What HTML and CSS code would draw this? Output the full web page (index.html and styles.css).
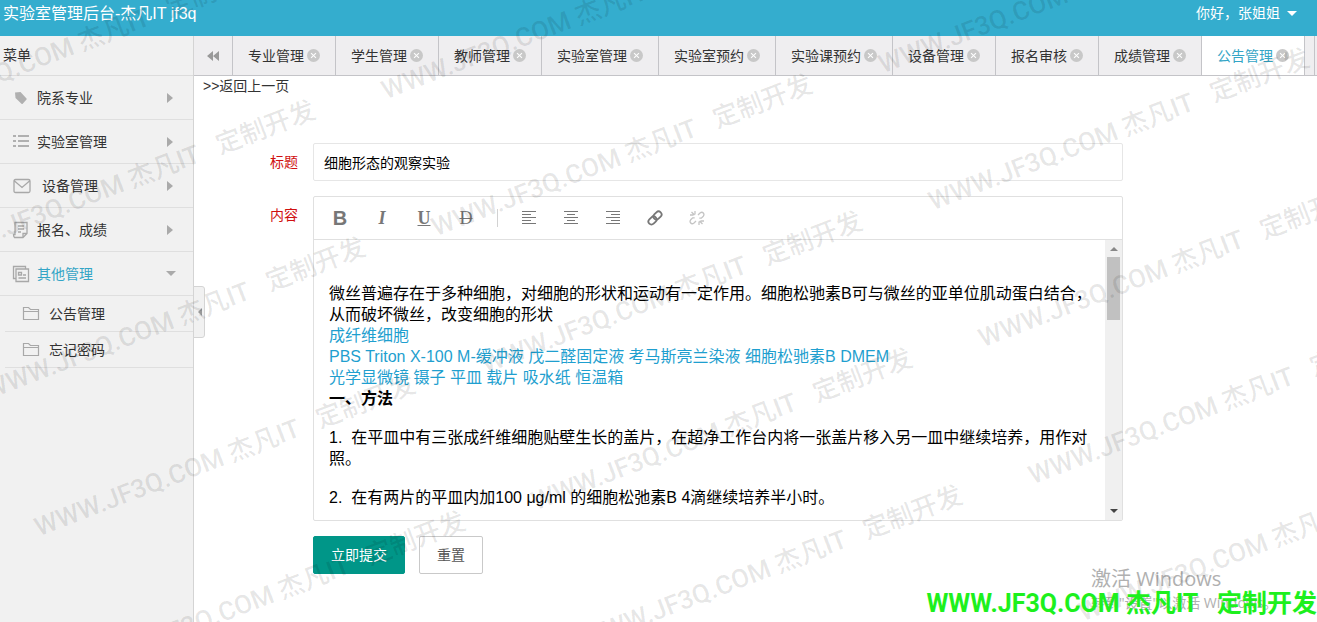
FILE: index.html
```html
<!DOCTYPE html>
<html lang="zh-CN">
<head>
    <meta charset="utf-8">
    <title>实验室管理后台</title>
    <link rel="stylesheet" href="styles.css">
</head>
<body>
    <header class="header">
        <span class="logo">实验室管理后台-杰凡IT jf3q</span>
        <a class="user" href="#">你好，张姐姐 <i class="caret"></i></a>
    </header>

    <div class="main">
        <nav class="side">
            <div class="side-title">菜单</div>
            <a class="item" href="#">
                <svg class="icon" width="18" height="18" viewBox="0 0 18 18"><path fill="#b0b0b0" d="M3 3.500L8.500 3 14.500 9.500Q15 10 14.500 10.500L10.500 15Q10 15.300 9.500 14.800L3.500 9Z"/></svg>
                院系专业<i class="arrow"></i>
            </a>
            <a class="item" href="#">
                <svg class="icon" width="18" height="18" viewBox="0 0 18 18"><path stroke="#b0b0b0" stroke-width="2" d="M1 3h3M6 3h11M1 8h3M6 8h11M1 13h3M6 13h11"/></svg>
                实验室管理<i class="arrow"></i>
            </a>
            <a class="item" href="#">
                <svg class="icon icon-mail" width="20" height="18" viewBox="0 0 20 18"><path fill="none" stroke="#a8a8a8" stroke-width="1.300" d="M3.500 2.500h13q1.500 0 1.500 1.500v10q0 1.500-1.500 1.500h-13q-1.500 0-1.500-1.500v-10q0-1.500 1.500-1.500zM2.500 4l7.500 6.500 7.500-6.500"/></svg>
                设备管理<i class="arrow"></i>
            </a>
            <a class="item" href="#">
                <svg class="icon" width="18" height="18" viewBox="0 0 18 18"><path fill="none" stroke="#a8a8a8" stroke-width="1.300" d="M3 1.500h12v11l-4 4h-8.500q-1-1-1-3h1.500zM15 12.500h-4v4M6 5h6M6 8h6M6 11h3"/></svg>
                报名、成绩<i class="arrow"></i>
            </a>
            <a class="item open" href="#">
                <svg class="icon" width="18" height="18" viewBox="0 0 18 18"><path fill="none" stroke="#a8a8a8" stroke-width="1.300" d="M4 4h12.500v12.500h-12.500zM4 13.500h-2.500v-12h12v2.500M6.500 7.500h3v2.500h-3zM11 10h3M6.500 13h7.500"/></svg>
                其他管理<i class="arrow"></i>
            </a>
            <a class="sub" href="#">
                <svg class="icon" width="18" height="16" viewBox="0 0 18 16"><path fill="none" stroke="#a8a8a8" stroke-width="1.200" d="M1.500 13.500v-12h5l2 2h8v10zM1.500 5.500h15"/></svg>
                公告管理
            </a>
            <a class="sub" href="#">
                <svg class="icon" width="18" height="16" viewBox="0 0 18 16"><path fill="none" stroke="#a8a8a8" stroke-width="1.200" d="M1.500 13.500v-12h5l2 2h8v10zM1.500 5.500h15"/></svg>
                忘记密码
            </a>
            <button class="fold" type="button" aria-label="收起菜单"></button>
        </nav>

        <div class="content">
            <div class="tabs">
                <button class="tab-prev" type="button" aria-label="向左">
                    <svg width="12" height="12" viewBox="0 0 12 12"><path fill="#999" d="M6 1v10L0 6zM12 1v10L6 6z"/></svg>
                </button>
                <button class="tab" type="button">专业管理<i class="close"></i></button>
                <button class="tab" type="button">学生管理<i class="close"></i></button>
                <button class="tab" type="button">教师管理<i class="close"></i></button>
                <button class="tab" type="button">实验室管理<i class="close"></i></button>
                <button class="tab" type="button">实验室预约<i class="close"></i></button>
                <button class="tab" type="button">实验课预约<i class="close"></i></button>
                <button class="tab" type="button">设备管理<i class="close"></i></button>
                <button class="tab" type="button">报名审核<i class="close"></i></button>
                <button class="tab" type="button">成绩管理<i class="close"></i></button>
                <button class="tab active" type="button">公告管理<i class="close"></i></button>
                <span class="tab-end"></span>
            </div>
            <a class="back" href="#">&gt;&gt;返回上一页</a>

            <form class="form" action="#">
                <div class="row">
                    <label for="title">标题</label>
                    <input class="text" id="title" name="title" value="细胞形态的观察实验">
                </div>
                <div class="row">
                    <label id="contentLabel">内容</label>
                    <div class="editor">
                        <div class="tools">
                            <button class="tool bold" type="button">B</button>
                            <button class="tool italic" type="button">I</button>
                            <button class="tool under" type="button">U</button>
                            <button class="tool strike" type="button">D</button>
                            <span class="split"></span>
                            <button class="tool" type="button" aria-label="左对齐"><svg width="16" height="16" viewBox="0 0 16 16"><path stroke="#777" d="M1 1.500h14M1 4.500h9M1 7.500h14M1 10.500h9M1 13.500h14"/></svg></button>
                            <button class="tool" type="button" aria-label="居中"><svg width="16" height="16" viewBox="0 0 16 16"><path stroke="#777" d="M1 1.500h14M4 4.500h8M1 7.500h14M4 10.500h8M1 13.500h14"/></svg></button>
                            <button class="tool" type="button" aria-label="右对齐"><svg width="16" height="16" viewBox="0 0 16 16"><path stroke="#777" d="M1 1.500h14M6 4.500h9M1 7.500h14M6 10.500h9M1 13.500h14"/></svg></button>
                            <button class="tool" type="button" aria-label="插入链接"><svg width="16" height="16" viewBox="0 0 16 16"><g fill="none" stroke="#777" stroke-width="1.800" transform="rotate(-45 8 8)"><rect x="0" y="5" width="9" height="6" rx="3"/><rect x="7" y="5" width="9" height="6" rx="3"/></g></svg></button>
                            <button class="tool" type="button" aria-label="清除链接"><svg width="16" height="16" viewBox="0 0 16 16"><path fill="none" stroke="#c4c4c4" stroke-width="1.300" d="M9 5l2-2q2-1.500 3.300 0t0 3.200l-2 2h-2M7 11l-2 2q-2 1.500-3.300 0t0-3.200l2-2h2M6 1v3.500M1 5h3.500M2.500 2l3 3M10 11.500v3.500M11.500 11h3.500M10.500 11l3 3"/></svg></button>
                        </div>
                        <div class="edit-wrap">
                            <div class="edit-body" contenteditable="true" role="textbox" aria-labelledby="contentLabel" spellcheck="false">
                                <p>微丝普遍存在于多种细胞，对细胞的形状和运动有一定作用。细胞松驰素B可与微丝的亚单位肌动蛋白结合，从而破坏微丝，改变细胞的形状<br>
                                <span class="blue">成纤维细胞<br>
                                PBS Triton X-100 M-缓冲液 戊二醛固定液 考马斯亮兰染液 细胞松驰素B DMEM<br>
                                光学显微镜 镊子 平皿 载片 吸水纸 恒温箱</span><br>
                                <b>一、方法</b></p>
                                <p>1.&nbsp; 在平皿中有三张成纤维细胞贴壁生长的盖片，在超净工作台内将一张盖片移入另一皿中继续培养，用作对照。</p>
                                <p>2.&nbsp; 在有两片的平皿内加100 μg/ml 的细胞松弛素B 4滴继续培养半小时。</p>
                            </div>
                            <div class="scroll">
                                <i class="scroll-up"></i>
                                <i class="thumb"></i>
                                <i class="scroll-down"></i>
                            </div>
                        </div>
                    </div>
                </div>
                <div class="buttons">
                    <button class="btn submit" type="submit">立即提交</button>
                    <button class="btn" type="reset">重置</button>
                </div>
            </form>
        </div>
    </div>

    <div class="activate">
        <div class="activate-title">激活 Windows</div>
        <div>转到"设置"以激活 Windows。</div>
    </div>
    <div class="marks"></div>
    <div class="brand">WWW.JF3Q.COM 杰凡IT&nbsp;&nbsp; 定制开发</div>

    <script src="script.js"></script>
</body>
</html>
```
FILE: styles.css
```css
* {
    box-sizing: border-box;
}

body {
    margin: 0;
    min-height: 100vh;
    display: flex;
    flex-direction: column;
    position: relative;
    overflow: hidden;
    font: 14px/20px "Liberation Sans", "Noto Sans CJK SC", sans-serif;
    color: #333;
    background: #fff;
}

a {
    color: inherit;
    text-decoration: none;
}

button, input {
    font: inherit;
    color: inherit;
    margin: 0;
}

.header {
    display: flex;
    justify-content: space-between;
    height: 36px;
    padding: 4px 20px 0 3px;
    background: #34adce;
    color: #fff;
}

.logo {
    font-size: 16px;
}

.user {
    display: flex;
    align-items: center;
    height: 18px;
    gap: 7px;
}

.caret {
    border: 5px solid transparent;
    border-top-color: #fff;
    border-bottom: 0;
}

.main {
    flex: 1;
    display: flex;
}

/* menu */
.side {
    position: relative;
    flex: 0 0 194px;
    background: #f1f1f1;
    border-right: 1px solid #d4d4d4;
}

.side-title {
    height: 40px;
    padding: 9px 3px;
    border-bottom: 1px solid #dcdcdc;
}

.item, .sub {
    display: flex;
    align-items: center;
    border-bottom: 1px solid #dfdfdf;
}

.item {
    height: 44px;
    padding: 0 17px 0 12px;
}

.sub {
    height: 36px;
    margin-left: 5px;
    padding-left: 17px;
}

.icon {
    margin-right: 7px;
}

.icon-mail {
    margin-right: 10px;
}

.sub .icon {
    margin-right: 9px;
}

.arrow {
    margin: 0 3px 0 auto;
    border: 5px solid transparent;
    border-left: 6px solid #aaa;
    border-right: 0;
}

.open {
    color: #34a5c6;
}

.open .arrow {
    margin-right: 0;
    border: 5px solid transparent;
    border-top-color: #aaa;
    border-bottom: 0;
}

.fold {
    position: absolute;
    left: 193px;
    top: 250px;
    width: 12px;
    height: 52px;
    padding: 0 4px;
    background: #f1f1f1;
    border: 1px solid #d4d4d4;
    border-radius: 0 3px 3px 0;
}

.fold::before {
    content: "";
    display: block;
    border: 4px solid transparent;
    border-right-color: #999;
    border-left: 0;
}

/* tabs */
.content {
    flex: 1;
    min-width: 0;
}

.tabs {
    display: flex;
    height: 40px;
    overflow: hidden;
    background: #efeef0;
    border-bottom: 1px solid #c4c4c8;
}

.tab, .tab-prev {
    display: flex;
    flex: none;
    align-items: center;
    border: 0;
    border-right: 1px solid #c4c4c8;
    background: none;
}

.tab-prev {
    width: 39px;
    justify-content: center;
}

.tab {
    gap: 3px;
    padding: 0 15px;
}

.active {
    background: #fff;
    color: #34a5c6;
}

.tab-end {
    width: 10px;
    border-right: 1px solid #c4c4c8;
}

.close {
    position: relative;
    width: 13px;
    height: 13px;
    border-radius: 50%;
    background: #c8c8c8;
}

.close::before, .close::after {
    content: "";
    position: absolute;
    left: 3px;
    top: 6px;
    width: 7px;
    height: 1px;
    background: #fff;
    transform: rotate(45deg);
}

.close::after {
    transform: rotate(-45deg);
}

.back {
    display: block;
    padding: 0 9px;
}

/* form */
.form {
    margin: 47px 194px 0 9px;
}

.row {
    display: flex;
    margin-bottom: 15px;
}

.row label {
    flex: 0 0 110px;
    padding: 9px 15px;
    text-align: right;
    color: #d01010;
}

.text {
    flex: 1;
    height: 38px;
    padding: 0 10px;
    border: 1px solid #e6e6e6;
    border-radius: 2px;
    color: #000;
}

.editor {
    flex: 1;
    min-width: 0;
    border: 1px solid #e0e0e0;
    border-radius: 2px;
}

.tools {
    display: flex;
    height: 43px;
    padding-left: 5px;
    border-bottom: 1px solid #e0e0e0;
}

.tool {
    display: flex;
    align-items: center;
    justify-content: center;
    width: 42px;
    padding: 0;
    border: 0;
    background: none;
    font-size: 18px;
    color: #777;
}

.bold {
    font-size: 20px;
    font-weight: bold;
}

.italic, .under, .strike {
    font-family: "Liberation Serif", serif;
}

.italic {
    font-style: italic;
    font-weight: bold;
}

.under {
    text-decoration: underline;
    font-weight: bold;
}

.strike {
    text-decoration: line-through;
}

.split {
    width: 1px;
    height: 18px;
    margin: 12px 10px 0;
    background: #d2d2d2;
}

.edit-wrap {
    display: flex;
    height: 280px;
}

.edit-body {
    flex: 1;
    min-width: 0;
    padding: 43px 12px 0 15px;
    overflow: hidden;
    font-size: 16px;
    line-height: 21px;
    color: #000;
}

.edit-body p {
    margin: 0 0 18px;
}

.blue {
    color: #1f9fcf;
}

.scroll {
    display: flex;
    flex-direction: column;
    align-items: center;
    width: 17px;
    padding: 7px 0;
    background: #f0f0f0;
}

.scroll-up, .scroll-down {
    border: 4px solid transparent;
}

.scroll-up {
    border-top: 0;
    border-bottom-color: #888;
}

.scroll-down {
    margin-top: auto;
    border-bottom: 0;
    border-top-color: #444;
}

.thumb {
    width: 13px;
    height: 63px;
    margin-top: 6px;
    background: #c1c1c1;
}

.buttons {
    display: flex;
    gap: 14px;
    padding-left: 110px;
}

.btn {
    height: 38px;
    padding: 0 17px;
    border: 1px solid #c9c9c9;
    border-radius: 2px;
    background: #fff;
    color: #555;
}

.submit {
    border-color: #009688;
    background: #009688;
    color: #fff;
}

/* overlays */
.activate {
    position: absolute;
    right: 34px;
    bottom: 9px;
    width: 192px;
    white-space: nowrap;
    font-family: "Open Sans", "Noto Sans CJK SC", sans-serif;
    color: #b0b0b0;
}

.activate-title {
    font-size: 20px;
    line-height: 28px;
}

.marks {
    position: absolute;
    inset: 0;
    overflow: hidden;
    pointer-events: none;
}

.mark, .brand {
    position: absolute;
    white-space: pre;
    font: 500 26px/30px Roboto, "Noto Sans CJK SC", sans-serif;
}

.mark {
    color: rgba(0, 0, 0, 0.1);
    transform: rotate(-21deg);
    transform-origin: 0 100%;
}

.brand {
    right: 0;
    bottom: 3px;
    font-size: 25px;
    font-weight: bold;
    color: #1df01d;
}
```
FILE: script.js
```js
// diagonal watermark, repeated on a slanted grid
const marks = document.querySelector('.marks');

for (let col = -1; col <= 2; col++) {
    for (let row = -3; row <= 6; row++) {
        let left = 388 + 50 * row + 497 * col;
        let top = 75 + 137 * row - 26 * col;
        // skip the ones that fall outside the page
        if (left < -370 || left > marks.clientWidth || top < -20 || top > marks.clientHeight + 110) {
            continue;
        }

        let mark = document.createElement('span');
        mark.className = 'mark';
        mark.textContent = 'WWW.JF3Q.COM 杰凡IT\u00a0\u00a0 定制开发';
        mark.style.left = left + 'px';
        mark.style.top = top + 'px';
        marks.append(mark);
    }
}
```
